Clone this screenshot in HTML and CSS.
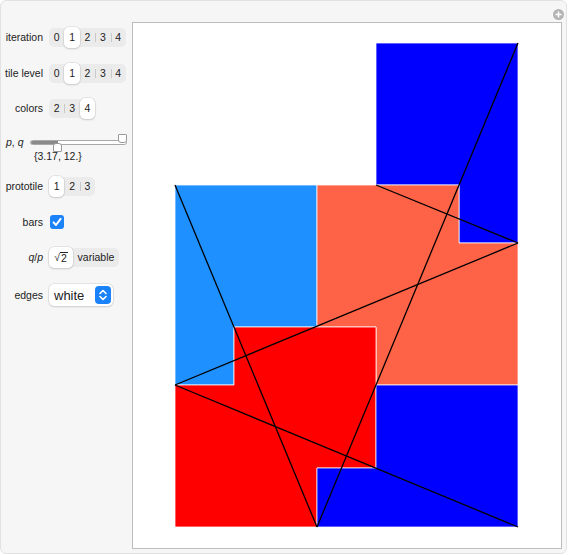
FILE: index.html
```html
<!DOCTYPE html>
<html>
  <head>
    <meta charset="utf-8">
    <title>Tiling</title>
    <link rel="stylesheet" href="styles.css">
  </head>
  <body>
    <div class="frame">
      <div class="panel">
        <div class="row row-iter">
          <div class="label">iteration</div>
          <div class="seg">
            <span>0</span><span class="on">1</span><span>2</span><span>3</span><span>4</span>
          </div>
        </div>
        <div class="row row-tile">
          <div class="label">tile level</div>
          <div class="seg">
            <span>0</span><span class="on">1</span><span>2</span><span>3</span><span>4</span>
          </div>
        </div>
        <div class="row row-colors">
          <div class="label">colors</div>
          <div class="seg">
            <span>2</span><span>3</span><span class="on">4</span>
          </div>
        </div>
        <div class="row row-slider">
          <div class="label label-pq"><i>p</i>, <i>q</i></div>
          <div class="slider">
            <div class="track"><div class="fill"></div></div>
            <div class="thumb thumb-low"></div>
            <div class="thumb thumb-high"></div>
          </div>
        </div>
        <div class="slider-value">{3.17, 12.}</div>
        <div class="row row-proto">
          <div class="label">prototile</div>
          <div class="seg">
            <span class="on">1</span><span>2</span><span>3</span>
          </div>
        </div>
        <div class="row row-bars">
          <div class="label">bars</div>
          <div class="check">
            <svg width="14" height="14" viewBox="0 0 14 14"><path d="M3.5 7.4 L6 10 L10.6 3.8" fill="none" stroke="#fff" stroke-width="2" stroke-linecap="round" stroke-linejoin="round"/></svg>
          </div>
        </div>
        <div class="row row-qp">
          <div class="label"><i>q</i>/<i>p</i></div>
          <div class="seg seg-wide">
            <span class="on">&radic;<span class="over">2</span></span><span class="word">variable</span>
          </div>
        </div>
        <div class="row row-edges">
          <div class="label">edges</div>
          <div class="popup">
            <span class="popup-text">white</span>
            <span class="popup-btn">
              <svg width="10" height="14" viewBox="0 0 10 14"><path d="M2 5.5 L5 2.5 L8 5.5 M2 8.5 L5 11.5 L8 8.5" fill="none" stroke="#fff" stroke-width="1.6" stroke-linecap="round" stroke-linejoin="round"/></svg>
            </span>
          </div>
        </div>
      </div>

      <div class="canvas">
        <svg width="428" height="525" viewBox="133 23 428 525">
          <g stroke="#ffffff" stroke-opacity="0.75" stroke-width="1">
            <polygon fill="#0000ff" points="376,43 518,43 518,243 459,243 459,185 376,185"/>
            <polygon fill="#1e90ff" points="175,185 317,185 317,327 234,327 234,385 175,385"/>
            <polygon fill="#ff6347" points="317,185 459,185 459,243 518,243 518,385 376,385 376,327 317,327"/>
            <polygon fill="#ff0000" points="234,327 376,327 376,468 317,468 317,527 175,527 175,385 234,385"/>
            <polygon fill="#0000ff" points="376,385 518,385 518,527 317,527 317,468 376,468"/>
          </g>
          <g stroke="#000" stroke-width="1.3" fill="none">
            <line x1="175" y1="185" x2="317" y2="527"/>
            <line x1="175" y1="385" x2="518" y2="243"/>
            <line x1="175" y1="385" x2="518" y2="527"/>
            <line x1="518" y1="43" x2="317" y2="527"/>
            <line x1="376" y1="185" x2="518" y2="243"/>
          </g>
        </svg>
      </div>

      <div class="plus">
        <svg width="11" height="11" viewBox="0 0 11 11"><circle cx="5.5" cy="5.5" r="5.5" fill="#b4b4b4"/><path d="M5.5 2.5 V8.5 M2.5 5.5 H8.5" stroke="#fff" stroke-width="1.6"/></svg>
      </div>
    </div>
  </body>
</html>
```

FILE: styles.css
```css
body, html {
  margin: 0;
}

body {
  font-family: "Liberation Sans", Arial, sans-serif;
  font-size: 10.5px;
  color: #222;
  background: #fff;
}

.frame {
  position: relative;
  width: 565px;
  height: 552px;
  border: 1px solid #e2e2e2;
  border-radius: 6px;
  background-color: #f6f6f6;
  display: flex;
}

.panel {
  width: 131px;
  display: flex;
  flex-direction: column;
}

.row {
  display: flex;
  align-items: center;
  height: 20px;
}

.label {
  width: 42px;
  margin-right: 6px;
  text-align: right;
  white-space: nowrap;
}

.row-iter { margin-top: 26px; }
.row-tile { margin-top: 16px; }
.row-colors { margin-top: 15px; }
.row-slider { margin-top: 14px; }
.row-proto { margin-top: 14px; }
.row-bars { margin-top: 16px; }
.row-qp { margin-top: 15px; }
.row-edges { margin-top: 17px; height: 22px; }

.label-pq {
  width: auto;
  margin-left: 5px;
  margin-right: 6px;
  text-align: left;
}

.seg {
  display: flex;
  height: 19px;
  background-color: #ebebeb;
  border-radius: 5px;
}

.seg > span {
  width: 15.4px;
  display: flex;
  align-items: center;
  justify-content: center;
  position: relative;
}

.seg > span + span:not(.on)::before {
  content: "";
  position: absolute;
  left: 0;
  top: 5px;
  bottom: 5px;
  border-left: 1px solid #c9c9c9;
}

.seg > span.on + span::before {
  display: none;
}

.seg > span.on {
  background-color: #fff;
  border-radius: 5px;
  margin: -1px 0;
  box-shadow: 0 0 0 0.5px #cfcfcf, 0 1px 2px rgba(0, 0, 0, 0.18);
  z-index: 1;
}

.seg-wide > span.on {
  width: 24px;
}

.seg-wide .word {
  width: 46px;
}

.over {
  border-top: 1px solid #222;
  padding: 0 1px;
  line-height: 10px;
}

.slider {
  position: relative;
  width: 97px;
  height: 20px;
}

.track {
  position: absolute;
  left: 0;
  right: 0;
  top: 8px;
  height: 3px;
  background-color: #fff;
  border: 1px solid #a8a8a8;
  border-radius: 3px;
}

.fill {
  width: 27px;
  height: 100%;
  background-color: #8a8a8a;
  border-radius: 2px 0 0 2px;
}

.thumb {
  position: absolute;
  width: 7px;
  height: 7px;
  background-color: #fff;
  border: 1px solid #999;
}

.thumb-low {
  left: 23px;
  top: 11px;
  border-radius: 3px 3px 1px 1px;
}

.thumb-high {
  right: 0;
  top: 2px;
  border-radius: 1px 1px 3px 3px;
}

.slider-value {
  margin-top: -2px;
  margin-left: 33px;
  height: 12px;
  line-height: 12px;
}

.check {
  width: 14px;
  height: 14px;
  margin-left: 1px;
  background-color: #1a82fb;
  border-radius: 3px;
  display: flex;
}

.popup {
  width: 64px;
  height: 22px;
  background-color: #fff;
  border-radius: 5px;
  box-shadow: 0 0 0 0.5px #cfcfcf, 0 1px 2px rgba(0, 0, 0, 0.15);
  display: flex;
  align-items: center;
  justify-content: space-between;
}

.popup-text {
  font-size: 13px;
  margin-left: 5px;
}

.popup-btn {
  width: 16px;
  height: 18px;
  margin-right: 2px;
  background-color: #1a82fb;
  border-radius: 4px;
  display: flex;
  align-items: center;
  justify-content: center;
}

.canvas {
  margin-top: 21px;
  width: 428px;
  height: 525px;
  border: 1px solid #bdbdbd;
  background-color: #fff;
}

.canvas svg {
  display: block;
}

.plus {
  position: absolute;
  top: 8px;
  right: 2px;
  width: 11px;
  height: 11px;
}
```
